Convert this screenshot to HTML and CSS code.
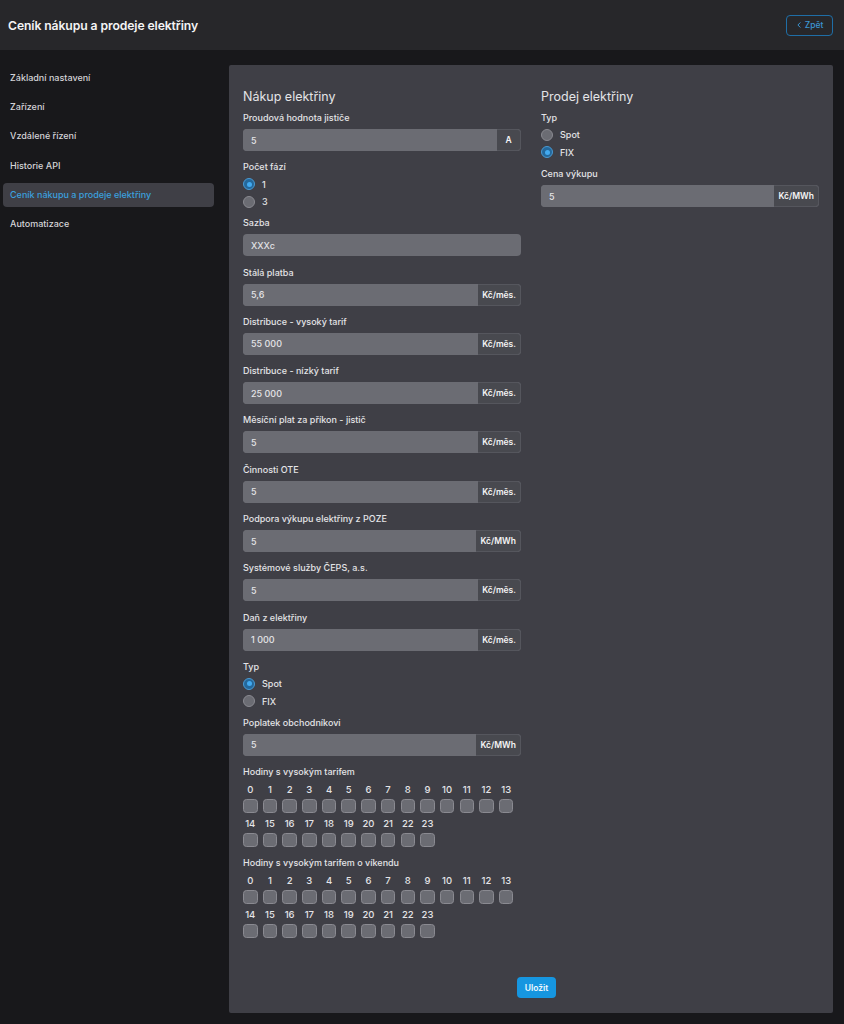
FILE: index.html
```html
<!DOCTYPE html>
<html lang="cs">
<head>
<meta charset="utf-8">
<title>Ceník nákupu a prodeje elektřiny</title>
<link rel="stylesheet" href="styles.css">
</head>
<body>
<header class="topbar">
  <h1 class="title">Ceník nákupu a prodeje elektřiny</h1>
  <button class="back-btn" type="button">
    <svg class="back-icon" viewBox="0 0 8 8" width="6" height="6"><path d="M5.5 1 L2.5 4 L5.5 7" fill="none" stroke="currentColor" stroke-width="1.3" stroke-linecap="round" stroke-linejoin="round"/></svg>
    Zpět
  </button>
</header>
<div class="layout">
  <nav class="sidebar">
    <a class="nav-item">Základní nastavení</a>
    <a class="nav-item">Zařízení</a>
    <a class="nav-item">Vzdálené řízení</a>
    <a class="nav-item">Historie API</a>
    <a class="nav-item active">Ceník nákupu a prodeje elektřiny</a>
    <a class="nav-item">Automatizace</a>
  </nav>
  <main class="panel">
    <div class="columns">
      <section class="col">
        <h2 class="section-title">Nákup elektřiny</h2>
        <div class="field">
          <label class="label">Proudová hodnota jističe</label>
          <div class="input-group"><input class="input" value="5"><span class="addon addon-a">A</span></div>
        </div>
        <div class="radio-group">
          <div class="label">Počet fází</div>
          <div class="radio-row"><span class="radio checked"></span><span class="radio-text">1</span></div>
          <div class="radio-row"><span class="radio"></span><span class="radio-text">3</span></div>
        </div>
        <div class="field">
          <label class="label">Sazba</label>
          <div class="input-group"><input class="input" value="XXXc"></div>
        </div>
        <div class="field">
          <label class="label">Stálá platba</label>
          <div class="input-group"><input class="input" value="5,6"><span class="addon">Kč/měs.</span></div>
        </div>
        <div class="field">
          <label class="label">Distribuce - vysoký tarif</label>
          <div class="input-group"><input class="input" value="55 000"><span class="addon">Kč/měs.</span></div>
        </div>
        <div class="field">
          <label class="label">Distribuce - nízký tarif</label>
          <div class="input-group"><input class="input" value="25 000"><span class="addon">Kč/měs.</span></div>
        </div>
        <div class="field">
          <label class="label">Měsíční plat za příkon - jistič</label>
          <div class="input-group"><input class="input" value="5"><span class="addon">Kč/měs.</span></div>
        </div>
        <div class="field">
          <label class="label">Činnosti OTE</label>
          <div class="input-group"><input class="input" value="5"><span class="addon">Kč/měs.</span></div>
        </div>
        <div class="field">
          <label class="label">Podpora výkupu elektřiny z POZE</label>
          <div class="input-group"><input class="input" value="5"><span class="addon">Kč/MWh</span></div>
        </div>
        <div class="field">
          <label class="label">Systémové služby ČEPS, a.s.</label>
          <div class="input-group"><input class="input" value="5"><span class="addon">Kč/měs.</span></div>
        </div>
        <div class="field">
          <label class="label">Daň z elektřiny</label>
          <div class="input-group"><input class="input" value="1 000"><span class="addon">Kč/měs.</span></div>
        </div>
        <div class="radio-group">
          <div class="label">Typ</div>
          <div class="radio-row"><span class="radio checked"></span><span class="radio-text">Spot</span></div>
          <div class="radio-row"><span class="radio"></span><span class="radio-text">FIX</span></div>
        </div>
        <div class="field">
          <label class="label">Poplatek obchodníkovi</label>
          <div class="input-group"><input class="input" value="5"><span class="addon">Kč/MWh</span></div>
        </div>
        <div class="hours">
          <div class="label">Hodiny s vysokým tarifem</div>
          <div class="hour-grid" id="grid1"></div>
        </div>
        <div class="hours">
          <div class="label">Hodiny s vysokým tarifem o víkendu</div>
          <div class="hour-grid" id="grid2"></div>
        </div>
      </section>
      <section class="col">
        <h2 class="section-title">Prodej elektřiny</h2>
        <div class="radio-group">
          <div class="label">Typ</div>
          <div class="radio-row"><span class="radio"></span><span class="radio-text">Spot</span></div>
          <div class="radio-row"><span class="radio checked"></span><span class="radio-text">FIX</span></div>
        </div>
        <div class="field">
          <label class="label">Cena výkupu</label>
          <div class="input-group"><input class="input" value="5"><span class="addon">Kč/MWh</span></div>
        </div>
      </section>
    </div>
    <div class="actions">
      <button class="save-btn" type="button">Uložit</button>
    </div>
  </main>
</div>
<script src="script.js"></script>
</body>
</html>
```
FILE: styles.css
```css
* { box-sizing: border-box; }
html, body { margin: 0; padding: 0; }
body {
  background: #18181b;
  font-family: Inter, "Noto Sans", sans-serif;
  color: #e4e4e7;
  width: 844px;
  height: 1024px;
  overflow: hidden;
}
.topbar {
  height: 50px;
  background: #27272a;
  display: flex;
  align-items: center;
  justify-content: space-between;
  padding: 0 11px 0 8px;
}
.title {
  margin: 0;
  font-size: 12.2px;
  font-weight: 600;
  color: #f4f4f5;
  letter-spacing: -0.1px;
}
.back-btn {
  height: 21px;
  width: 47px;
  border: 1px solid #1f6ea6;
  border-radius: 4px;
  background: transparent;
  color: #3c95d3;
  font-family: inherit;
  font-size: 8.5px;
  font-weight: 500;
  display: flex;
  align-items: center;
  justify-content: center;
  gap: 3px;
  padding: 0;
}
.layout {
  display: flex;
  padding: 15px 11px 11px 0;
  height: 974px;
}
.sidebar {
  width: 218px;
  flex: none;
  padding: 0 4px 0 3px;
  display: flex;
  flex-direction: column;
  gap: 5.4px;
}
.nav-item {
  height: 24px;
  display: flex;
  align-items: center;
  padding-left: 7px;
  font-size: 9px;
  font-weight: 500;
  color: #d4d4d8;
  border-radius: 4px;
}
.nav-item.active {
  background: #3f3f46;
  color: #3ba0de;
}
.panel {
  flex: 1;
  margin-left: 11px;
  background: #3f3f46;
  border-radius: 2px;
  padding: 24px 14px 15px;
  display: flex;
  flex-direction: column;
}
.columns {
  display: grid;
  grid-template-columns: 278px 278px;
  column-gap: 20px;
}
.section-title {
  margin: 0 0 7px;
  font-size: 12.5px;
  line-height: 16px;
  font-weight: 400;
  color: #e4e4e7;
}
.label {
  display: block;
  font-size: 9px;
  line-height: 12px;
  font-weight: 500;
  color: #e4e4e7;
  margin-bottom: 5px;
}
.field { margin-bottom: 10.3px; }
.input-group {
  display: flex;
  height: 22px;
  border-radius: 4px;
  overflow: hidden;
  background: #6b6c73;
}
.input {
  flex: 1;
  min-width: 0;
  border: 0;
  background: #6b6c73;
  color: #e4e4e7;
  font-family: inherit;
  font-size: 9px;
  font-weight: 500;
  padding: 0 8px;
  outline: none;
}
.addon {
  flex: none;
  background: #48494f;
  color: #f4f4f5;
  font-size: 8.5px;
  font-weight: 600;
  display: flex;
  align-items: center;
  justify-content: center;
  padding: 0 4px;
  border: 1px solid #55565d;
  border-left: 0;
  border-radius: 0 4px 4px 0;
}
.addon-a { width: 24px; padding: 0; }
.radio-group { margin-bottom: 7px; }
.radio-group .label { margin-bottom: 2px; }
.radio-row {
  height: 17.5px;
  display: flex;
  align-items: center;
  gap: 7px;
}
.radio {
  width: 12px;
  height: 12px;
  border-radius: 50%;
  background: #6b6c73;
  border: 1px solid #8a8a91;
  flex: none;
  position: relative;
}
.radio.checked {
  background: #24689b;
  border-color: #4a9ad3;
}
.radio.checked::after {
  content: "";
  position: absolute;
  left: 2.5px;
  top: 2.5px;
  width: 5px;
  height: 5px;
  border-radius: 50%;
  background: #43aaf0;
}
.radio-text {
  font-size: 9px;
  font-weight: 500;
  color: #e4e4e7;
}
.hours { margin-bottom: 10px; }
.hour-grid {
  display: flex;
  flex-wrap: wrap;
  column-gap: 5.2px;
  row-gap: 4px;
}
.hour {
  width: 14.5px;
  display: flex;
  flex-direction: column;
  align-items: center;
  gap: 2px;
}
.hour-num {
  font-size: 9.5px;
  line-height: 14px;
  font-weight: 500;
  color: #e4e4e7;
  white-space: nowrap;
}
.checkbox {
  width: 14.5px;
  height: 14px;
  border-radius: 3.5px;
  background: #6b6c73;
  border: 1px solid #8a8a91;
}
.actions {
  margin-top: auto;
  display: flex;
  justify-content: center;
  padding-left: 11px;
}
.save-btn {
  height: 21px;
  width: 39px;
  border: 0;
  border-radius: 4px;
  background: #1696e0;
  color: #f0f9ff;
  font-family: inherit;
  font-size: 8.5px;
  font-weight: 600;
  padding: 0;
}
```
FILE: script.js
```js
["grid1", "grid2"].forEach(function (id) {
  var grid = document.getElementById(id);
  for (var h = 0; h < 24; h++) {
    var item = document.createElement("div");
    item.className = "hour";
    var n = document.createElement("span");
    n.className = "hour-num";
    n.textContent = h;
    var c = document.createElement("span");
    c.className = "checkbox";
    item.appendChild(n);
    item.appendChild(c);
    grid.appendChild(item);
  }
});
```
